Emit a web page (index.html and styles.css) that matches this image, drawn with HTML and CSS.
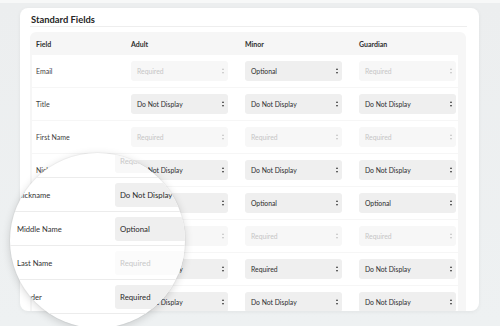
FILE: index.html
```html
<!DOCTYPE html>
<html>
<head>
<meta charset="utf-8">
<link rel="stylesheet" href="styles.css">
</head>
<body>
<div class="page">
  <div class="card">
    <div class="card-head"><h2>Standard Fields</h2></div>
    <div class="table">
      <div class="row head"><span>Field</span><span>Adult</span><span>Minor</span><span>Guardian</span></div>
      <div class="row"><span class="label">Email</span><div class="sel dis">Required</div><div class="sel">Optional</div><div class="sel dis">Required</div></div>
      <div class="row"><span class="label">Title</span><div class="sel">Do Not Display</div><div class="sel">Do Not Display</div><div class="sel">Do Not Display</div></div>
      <div class="row"><span class="label">First Name</span><div class="sel dis">Required</div><div class="sel dis">Required</div><div class="sel dis">Required</div></div>
      <div class="row"><span class="label">Nickname</span><div class="sel">Do Not Display</div><div class="sel">Do Not Display</div><div class="sel">Do Not Display</div></div>
      <div class="row"><span class="label">Middle Name</span><div class="sel">Optional</div><div class="sel">Optional</div><div class="sel">Optional</div></div>
      <div class="row"><span class="label">Last Name</span><div class="sel dis">Required</div><div class="sel dis">Required</div><div class="sel dis">Required</div></div>
      <div class="row"><span class="label">Gender</span><div class="sel">Do Not Display</div><div class="sel">Required</div><div class="sel">Do Not Display</div></div>
      <div class="row"><span class="label"></span><div class="sel">Do Not Display</div><div class="sel">Do Not Display</div><div class="sel">Do Not Display</div></div>
    </div>
  </div>
  <div class="lens">
    <div class="lens-rows">
      <div class="lrow"><span class="label">First Name</span><div class="sel big dis">Required</div></div>
      <div class="lrow"><span class="label">Nickname</span><div class="sel big">Do Not Display</div></div>
      <div class="lrow"><span class="label">Middle Name</span><div class="sel big">Optional</div></div>
      <div class="lrow"><span class="label">Last Name</span><div class="sel big dis light">Required</div></div>
      <div class="lrow"><span class="label">Gender</span><div class="sel big">Required</div></div>
    </div>
  </div>
</div>
</body>
</html>
```

FILE: styles.css
```css
* { box-sizing: border-box; }
html, body { margin: 0; padding: 0; }
body {
  font-family: Lato, "Open Sans", "Liberation Sans", sans-serif;
  background: linear-gradient(to bottom, #f7f8f8 0, #f7f8f8 3px, #eceeef 3px, #eef1f2 100%);
  width: 500px;
  height: 326px;
  overflow: hidden;
}
.page {
  position: relative;
  width: 500px;
  height: 326px;
  padding-top: 8px;
}
.card {
  margin: 0 21px 0 20px;
  height: 303px;
  background: #fff;
  border-radius: 8px;
  overflow: hidden;
  box-shadow: 0 1px 4px rgba(0, 0, 0, 0.06);
}
.card-head {
  margin: 0 12px 0 10px;
  padding: 5px 0 0 1px;
  border-bottom: 1px solid #eeeeee;
}
.card-head h2 {
  margin: 0;
  font-size: 9.4px;
  line-height: 13px;
  font-weight: 700;
  color: #262626;
}
.table {
  margin: 5px 13px 0 10px;
  background: #f6f6f6;
  border-radius: 6px 6px 0 0;
  padding: 0 8px 0 2px;
}
.row {
  display: grid;
  grid-template-columns: 78px 97px 97px 97px;
  column-gap: 17px;
  align-items: center;
  padding-left: 4px;
  height: 32px;
  background: #fff;
  margin-bottom: 1px;
}
.row.head {
  height: 23px;
  background: transparent;
  margin-bottom: 0;
  font-weight: 700;
  font-size: 7px;
  color: #2e2e2e;
}
.label {
  font-size: 7px;
  color: #3e3e3e;
  white-space: nowrap;
}
.sel {
  position: relative;
  height: 20px;
  border-radius: 3px;
  background: #efefef;
  color: #2e2e2e;
  font-size: 6.8px;
  line-height: 20px;
  padding-left: 6px;
  white-space: nowrap;
}
.sel::before,
.sel::after {
  content: "";
  position: absolute;
  right: 4px;
  width: 0;
  height: 0;
  border-left: 1.5px solid transparent;
  border-right: 1.5px solid transparent;
}
.sel::before {
  top: 6.5px;
  border-bottom: 2.5px solid #333;
}
.sel::after {
  top: 10.5px;
  border-top: 2.5px solid #333;
}
.sel.dis {
  background: #f7f7f7;
  color: #c6c6c6;
}
.sel.dis::before { border-bottom-color: #c2c2c2; }
.sel.dis::after { border-top-color: #c2c2c2; }

.lens {
  position: absolute;
  left: 10px;
  top: 153px;
  width: 175px;
  height: 175px;
  border-radius: 50%;
  overflow: hidden;
  background: #fff;
  box-shadow: 0 0 0 1px rgba(0, 0, 0, 0.03), 0 2px 9px rgba(0, 0, 0, 0.16);
}
.lens-rows {
  position: absolute;
  left: 0;
  right: 0;
  top: -9px;
}
.lrow {
  display: grid;
  grid-template-columns: 98px 110px;
  align-items: center;
  height: 34px;
  padding-left: 7px;
  border-bottom: 1px solid #ececec;
}
.lrow .label {
  font-size: 7.6px;
  color: #333;
}
.sel.big {
  height: 24px;
  line-height: 24px;
  font-size: 7.8px;
  padding-left: 5px;
  color: #2a2a2a;
}
.sel.big.dis { color: #c8c8c8; background: #f8f8f8; }
.sel.big.light { background: #fbfbfb; }
.sel.big::before, .sel.big::after { display: none; }
```
